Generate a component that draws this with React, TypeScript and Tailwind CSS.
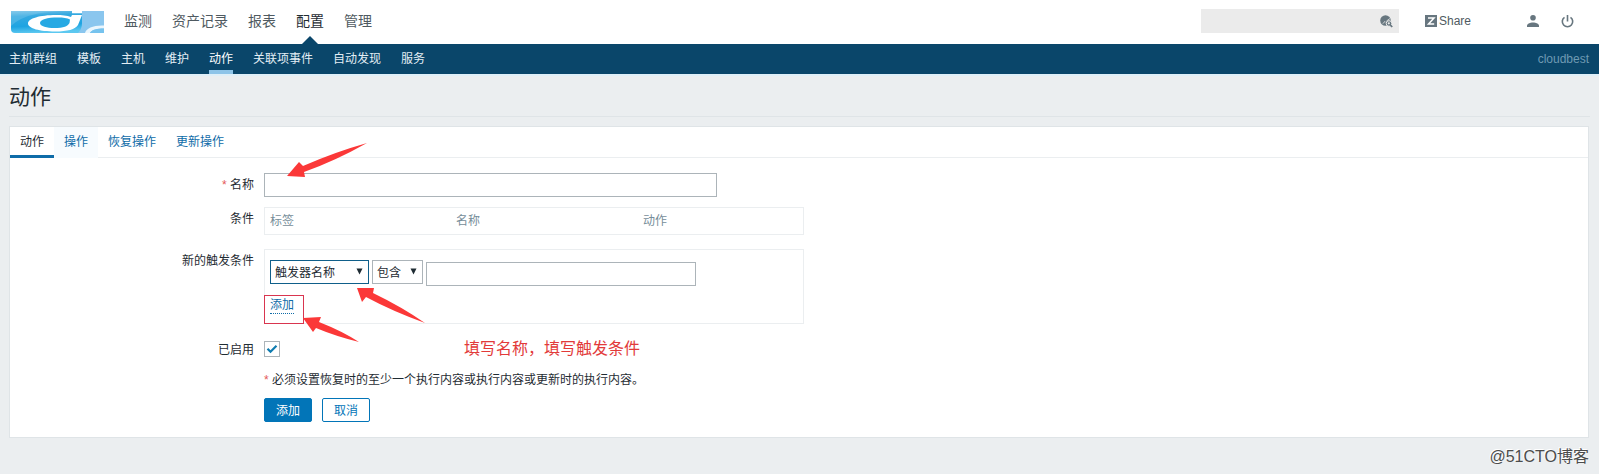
import { FC, ReactNode, useState } from 'react';

const MENU = ['监测', '资产记录', '报表', '配置', '管理'];
const SUB_MENU = ['主机群组', '模板', '主机', '维护', '动作', '关联项事件', '自动发现', '服务'];
const TABS = ['动作', '操作', '恢复操作', '更新操作'];

const Logo: FC = () => (
  <svg width="93" height="22" viewBox="0 0 93 22" role="img" aria-label="cloudbest">
    <defs>
      <linearGradient id="logo-bg" x1="0" y1="0" x2="0.2" y2="1">
        <stop offset="0" stopColor="#7cc4e8" />
        <stop offset="0.25" stopColor="#35a9e0" />
        <stop offset="0.7" stopColor="#1ea4e2" />
        <stop offset="1" stopColor="#5cc8f0" />
      </linearGradient>
      <clipPath id="logo-clip">
        <path d="M0 0H93V22H4Q0 22 0 18Z" />
      </clipPath>
    </defs>
    <g clipPath="url(#logo-clip)">
      <rect width="93" height="22" fill="url(#logo-bg)" />
      <path d="M0 0H50Q24 1 10 8Q4 11 0 15Z" fill="#a6dbf3" opacity="0.25" />
      <path d="M71 0H93V22H67Q71 18 71 12Z" fill="#8ac6ee" />
      <path d="M60 6C56 4.500 51 4 45 4C29 4 17 7.500 17 12.500C17 17.500 29 20.500 44 20.500Q63 20.500 67 14L71 4H61Z" fill="#fff" />
      <path d="M59 8.500C56 7 52 6.500 47 6.500C36 6.500 29 8.500 29 12C29 15.500 36 17 43 17C53 17 57 15 58.500 12Z" fill="#27a9e3" />
      <path d="M61 0H71V2.200H61Z" fill="#fff" />
      <path d="M93 14.500C83 14 75 17 74 22H79C81 18.500 86 17.500 93 17.500Z" fill="#eaf6fd" />
      <path d="M79 22C81 18.500 86 17.500 93 17.500V22Z" fill="#76c3ee" />
    </g>
  </svg>
);

const SearchIcon: FC = () => (
  <svg width="13" height="13" viewBox="0 0 13 13" fill="none">
    <circle cx="5.500" cy="5.500" r="5.300" fill="#67767f" />
    <path d="M2.500 8.800L5 6.500L6 7.500M6.500 6L10 3.500" stroke="#ebebeb" strokeWidth="0.800" />
    <circle cx="9" cy="8.500" r="2.800" fill="#67767f" stroke="#ebebeb" />
    <circle cx="8.800" cy="8.300" r="1.100" fill="#ebebeb" />
    <path d="M10.300 10L12.200 12" stroke="#67767f" strokeWidth="1.800" />
  </svg>
);

const ShareIcon: FC = () => (
  <svg width="12" height="12" viewBox="0 0 12 12">
    <rect width="12" height="12" fill="#67767f" />
    <path d="M3 3H9L3.500 9H9.200" fill="none" stroke="#fff" strokeWidth="1.500" />
  </svg>
);

const UserIcon: FC = () => (
  <svg width="12" height="12" viewBox="0 0 12 12" fill="#67767f">
    <circle cx="6" cy="2.800" r="2.800" />
    <path d="M0 12V10.800C0 8.800 3 7.500 6 7.500S12 8.800 12 10.800V12Z" />
  </svg>
);

const PowerIcon: FC = () => (
  <svg width="13" height="13" viewBox="0 0 13 13" fill="none" stroke="#67767f" strokeWidth="1.600">
    <path d="M6.500 0V6.500" />
    <path d="M3.500 2.300A5.200 5.200 0 1 0 9.500 2.300" />
  </svg>
);

const Select: FC<{ label: string; value: string; className: string }> = (props) => (
  <div className="relative">
    <select
      aria-label={props.label}
      className={`block h-6 appearance-none border bg-white pl-1 pt-0.5 outline-none ${props.className}`}
    >
      <option>{props.value}</option>
    </select>
    <svg className="pointer-events-none absolute right-1.5 top-2" width="7" height="7" viewBox="0 0 7 7">
      <path d="M0.500 0.500H6.500L3.500 6.500Z" fill="#1f2c33" />
    </svg>
  </div>
);

const Row: FC<{ label?: ReactNode; htmlFor?: string; className?: string; children: ReactNode }> = (props) => (
  <div className="grid grid-cols-[244px_1fr] gap-2.5">
    <div className={`text-right ${props.className ?? 'pt-1'}`}>
      {props.label && <label htmlFor={props.htmlFor}>{props.label}</label>}
    </div>
    <div>{props.children}</div>
  </div>
);

const Star: FC = () => <span className="text-[#e45959]">*</span>;

const Arrows: FC = () => (
  <svg className="pointer-events-none absolute left-0 top-0" width="440" height="350" viewBox="0 0 440 350" fill="#fb3838">
    <path d="M287 176L299 162L303 166Q335 152 367 143Q335 161 304 172L305 177Z" />
    <path d="M357 288L374 288L373 293Q402 307 425 323Q392 311 366 297L362 302Z" />
    <path d="M303 318L321 317L319 322Q342 331 359 342Q335 336 316 328L313 332Z" />
  </svg>
);

export default function App() {
  const [tab, setTab] = useState<string>('动作');
  const [enabled, setEnabled] = useState<boolean>(true);

  return (
    <div className="relative min-h-screen bg-[#ebeef0] font-['Liberation_Sans','Noto_Sans_CJK_SC',sans-serif] text-xs leading-4 text-[#1f2c33]">
      <header className="flex h-11 items-center bg-white pl-[11px] pr-[25px]">
        <Logo />
        <nav className="ml-5 flex h-full gap-5 text-sm">
          {MENU.map((item) => (
            <a
              key={item}
              href="#"
              className={`relative flex items-center pb-0.5 ${item === '配置' ? 'text-[#1f2c33]' : 'text-[#4f5a61]'}`}
            >
              {item}
              {item === '配置' && (
                <svg className="absolute bottom-0 left-1.5" width="16" height="8" viewBox="0 0 16 8">
                  <path d="M0 8L8 0L16 8Z" fill="#0a466a" />
                </svg>
              )}
            </a>
          ))}
        </nav>
        <div className="ml-auto flex items-center pb-0.5">
          <div className="flex h-6 w-[198px] items-center bg-[#ebebeb] pr-1.5">
            <input aria-label="搜索" className="h-6 min-w-0 flex-1 bg-transparent px-1 outline-none" />
            <button aria-label="搜索">
              <SearchIcon />
            </button>
          </div>
          <a href="#" className="ml-[26px] flex items-center gap-0.5 text-[#4f5a61]">
            <ShareIcon />
            Share
          </a>
          <a href="#" aria-label="用户" className="ml-14">
            <UserIcon />
          </a>
          <a href="#" aria-label="退出" className="ml-[22px]">
            <PowerIcon />
          </a>
        </div>
      </header>

      <nav className="flex h-[30px] gap-5 bg-[#0a466a] pl-[9px] pr-2.5 text-[#e3eef5]">
        {SUB_MENU.map((item) => (
          <a
            key={item}
            href="#"
            className={`flex items-center border-b-4 pt-1 ${item === '动作' ? 'border-[#8ec4e8] text-white' : 'border-transparent'}`}
          >
            {item}
          </a>
        ))}
        <span className="ml-auto flex items-center text-[#6f9ab3]">cloudbest</span>
      </nav>

      <div className="border-t-2 border-[#dfeff8] px-[9px] pt-[7px]">
        <h1 className="border-b border-[#dfe4e7] pb-[5px] text-[21px] leading-[28px]">动作</h1>
      </div>

      <main className="ml-[9px] mr-2.5 mt-[9px] border border-[#dfe4e7] bg-white pb-[15px]">
        <div className="flex h-[31px] border-b border-[#ebeef0]">
          {TABS.map((item) => (
            <button
              key={item}
              onClick={() => setTab(item)}
              className={`h-[31px] border-b-[3px] px-2.5 pt-0.5 ${
                tab === item ? 'border-[#0f6ca8] text-[#1f2c33]' : 'border-transparent text-[#0f6ca8]'
              } ${item === '操作' ? 'bg-[#f7fbfe]' : ''}`}
            >
              {item}
            </button>
          ))}
        </div>

        <form className="mt-[15px]" onSubmit={(e) => e.preventDefault()}>
          <Row htmlFor="name" label={<><Star /> 名称</>}>
            <input id="name" className="block h-6 w-[453px] border border-[#acb4b9] px-1 outline-none" />
          </Row>

          <div className="mt-2.5">
            <Row label="条件" htmlFor="conditions">
              <div className="flex h-7 w-[540px] items-center border border-[#ebeef0] px-[5px]">
                <table id="conditions" className="w-full table-fixed text-left text-[#768d99]">
                  <thead>
                    <tr>
                      <th className="w-[186px] font-normal">标签</th>
                      <th className="w-[187px] font-normal">名称</th>
                      <th className="font-normal">动作</th>
                    </tr>
                  </thead>
                </table>
              </div>
            </Row>
          </div>

          <div className="mt-3.5">
            <Row label="新的触发条件" htmlFor="pattern">
              <div className="relative h-[75px] w-[540px] border border-[#ebeef0] px-[5px] pt-2.5">
                <div className="flex gap-[3px]">
                  <Select label="条件类型" value="触发器名称" className="w-[99px] border-[#0f5f8a]" />
                  <Select label="运算符" value="包含" className="w-[51px] border-[#acb4b9]" />
                  <input id="pattern" className="mt-0.5 h-6 w-[270px] border border-[#acb4b9] px-1 outline-none" />
                </div>
                <button className="mt-[11px] block border-b border-dotted border-[#0f6ca8] leading-4 text-[#0f6ca8]">
                  添加
                </button>
                <span className="pointer-events-none absolute -bottom-px -left-px h-[29px] w-10 border border-[#d9354f]" />
              </div>
            </Row>
          </div>

          <div className="mt-[17px]">
            <Row label="已启用" htmlFor="enabled" className="pt-px">
              <div className="relative h-4 w-4">
                <input
                  id="enabled"
                  type="checkbox"
                  checked={enabled}
                  onChange={(e) => setEnabled(e.target.checked)}
                  className="block h-4 w-4 appearance-none border border-[#acb4b9] bg-white"
                />
                {enabled && (
                  <svg className="pointer-events-none absolute left-0 top-0" width="16" height="16" viewBox="0 0 16 16">
                    <path d="M3.500 7.800L6.500 10.800L12.500 4.800" fill="none" stroke="#0f7cb0" strokeWidth="2.200" />
                  </svg>
                )}
              </div>
            </Row>
          </div>

          <div className="mt-3.5">
            <Row>
              <p>
                <Star /> 必须设置恢复时的至少一个执行内容或执行内容或更新时的执行内容。
              </p>
            </Row>
          </div>

          <div className="mt-2.5">
            <Row>
              <div className="flex gap-2.5">
                <button className="h-6 w-12 rounded-xs border border-[#0275b8] bg-[#0275b8] pt-0.5 text-white">添加</button>
                <button className="h-6 w-12 rounded-xs border border-[#0275b8] bg-white pt-0.5 text-[#0275b8]">取消</button>
              </div>
            </Row>
          </div>
        </form>
      </main>

      <Arrows />
      <p className="absolute left-[464px] top-[339px] text-base leading-5 text-[#e23a3a]">填写名称，填写触发条件</p>
      <p className="absolute right-2.5 top-[447px] text-base leading-5 text-[#4c4c4c] [text-shadow:-1px_-1px_0_#ffffff]">
        @51CTO博客
      </p>
    </div>
  );
}
